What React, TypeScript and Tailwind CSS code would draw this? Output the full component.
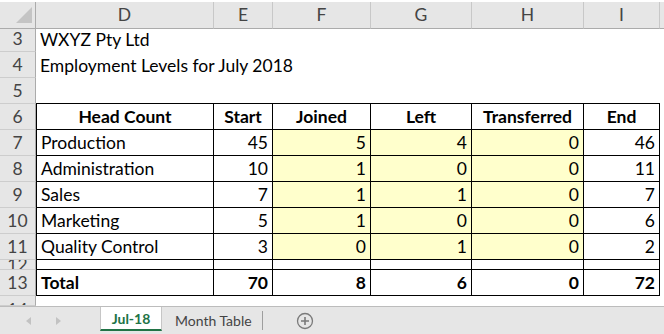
import React from "react";

type Row = {
  n: string;
  h: string;
  cells?: string[];
  kind?: "title" | "head" | "body" | "blank" | "total" | "top";
};

const ROWS: Row[] = [
  { n: "3", h: "h-[26px]", cells: ["WXYZ Pty Ltd"], kind: "title" },
  { n: "4", h: "h-[26px]", cells: ["Employment Levels for July 2018"], kind: "title" },
  { n: "5", h: "h-[26px]", kind: "top" },
  { n: "6", h: "h-[26px]", cells: ["Head Count", "Start", "Joined", "Left", "Transferred", "End"], kind: "head" },
  { n: "7", h: "h-[26px]", cells: ["Production", "45", "5", "4", "0", "46"], kind: "body" },
  { n: "8", h: "h-[26px]", cells: ["Administration", "10", "1", "0", "0", "11"], kind: "body" },
  { n: "9", h: "h-[26px]", cells: ["Sales", "7", "1", "1", "0", "7"], kind: "body" },
  { n: "10", h: "h-[26px]", cells: ["Marketing", "5", "1", "0", "0", "6"], kind: "body" },
  { n: "11", h: "h-[26px]", cells: ["Quality Control", "3", "0", "1", "0", "2"], kind: "body" },
  { n: "12", h: "h-[10px]", kind: "blank" },
  { n: "13", h: "h-[26px]", cells: ["Total", "70", "8", "6", "0", "72"], kind: "total" },
];

const GRID = "grid grid-cols-[36px_178px_59px_98px_101px_112px_76px_1fr]";
const COLS = ["D", "E", "F", "G", "H", "I"];

function RowHead({ n, h, clipTop }: { n: string; h: string; clipTop?: boolean }) {
  return (
    <div
      className={`${h} bg-[#e6e6e6] border-r border-b border-r-[#ababab] border-b-[#cdcdcd] text-[#444] flex justify-center overflow-hidden ${
        clipTop ? "items-start pt-[5px]" : "items-center pt-[1px]"
      }`}
    >
      <span className="leading-none">{n}</span>
    </div>
  );
}

function SheetRow({ row }: { row: Row }) {
  const inTable = row.kind === "head" || row.kind === "body" || row.kind === "blank" || row.kind === "total";
  return (
    <div className={GRID}>
      <RowHead n={row.n} h={row.h} />
      {COLS.map((c, i) => {
        const text = row.cells?.[i] ?? "";
        const yellow = row.kind === "body" && i >= 2 && i <= 4;
        let cls = `${row.h} flex items-center pt-[2px] whitespace-nowrap `;
        if (inTable) cls += "border-r border-b border-black ";
        if (inTable && i === 0) cls += "border-l border-l-black ";
        if (row.kind === "top") cls += "border-b border-black ";
        if (yellow) cls += "bg-[#ffffcc] ";
        if (row.kind === "head") cls += "justify-center font-bold ";
        else if (row.kind === "title") cls += "pl-[4px] overflow-visible ";
        else if (i === 0) cls += "pl-[4px] ";
        else cls += "justify-end pr-[4px] ";
        if (row.kind === "total") cls += "font-bold ";
        if (row.kind === "blank")
          cls = `${row.h} border-r border-b border-black ${i === 0 ? "border-l border-l-black" : ""}`;
        return (
          <div key={c} className={cls}>
            {text}
          </div>
        );
      })}
      <div className={row.h} />
    </div>
  );
}

function TabBar() {
  return (
    <div className="h-[28px] bg-[#e6e6e6] border-t border-[#bcbcbc] flex items-stretch text-[14px]">
      <div className="w-[100px] flex items-center">
        <svg width="100" height="27" viewBox="0 0 100 27">
          <path d="M31 10 L26 14 L31 18 Z" fill="#c2c2c2" />
          <path d="M56 10 L61 14 L56 18 Z" fill="#c2c2c2" />
        </svg>
      </div>
      <div className="w-[62px] mb-[3px] bg-white border-x border-[#c6c6c6] border-b-2 border-b-[#217346] flex items-center justify-center font-bold text-[#217346]">
        Jul-18
      </div>
      <div className="w-[100px] flex items-center pl-[13px] text-[#444]">Month Table</div>
      <div className="flex items-center">
        <div className="w-px h-[19px] bg-[#9e9e9e]" />
      </div>
      <div className="flex items-center pl-[33px]">
        <svg width="18" height="18" viewBox="0 0 18 18">
          <circle cx="9" cy="9" r="7.5" fill="none" stroke="#7a7a7a" strokeWidth="1.3" />
          <path d="M9 5 V13 M5 9 H13" stroke="#7a7a7a" strokeWidth="1.6" />
        </svg>
      </div>
    </div>
  );
}

export default function App() {
  return (
    <div className="w-[664px] h-[334px] overflow-hidden bg-white font-['Lato',sans-serif] text-[17.5px] text-black flex flex-col">
      {/* column letters */}
      <div className={`${GRID} h-[26px] border-t-2 border-white`}>
        <div className="bg-[#e6e6e6] border-r border-b border-r-[#ababab] border-b-[#ababab] relative">
          <svg className="absolute left-0 top-0" width="35" height="24" viewBox="0 0 35 24">
            <path d="M32 5 L32 21 L16 21 Z" fill="#c4c4c4" />
          </svg>
        </div>
        {COLS.map((c) => (
          <div
            key={c}
            className="bg-[#e6e6e6] border-r border-b border-r-[#c8c8c8] border-b-[#ababab] flex items-center justify-center text-[#444]"
          >
            {c}
          </div>
        ))}
        <div className="bg-[#e6e6e6] border-b border-b-[#ababab]" />
      </div>
      {ROWS.map((r) => (
        <SheetRow key={r.n} row={r} />
      ))}
      {/* partly hidden row 14 */}
      <div className={GRID}>
        <RowHead n="14" h="h-[10px]" clipTop />
        <div className="col-span-7 h-[10px]" />
      </div>
      <TabBar />
    </div>
  );
}
